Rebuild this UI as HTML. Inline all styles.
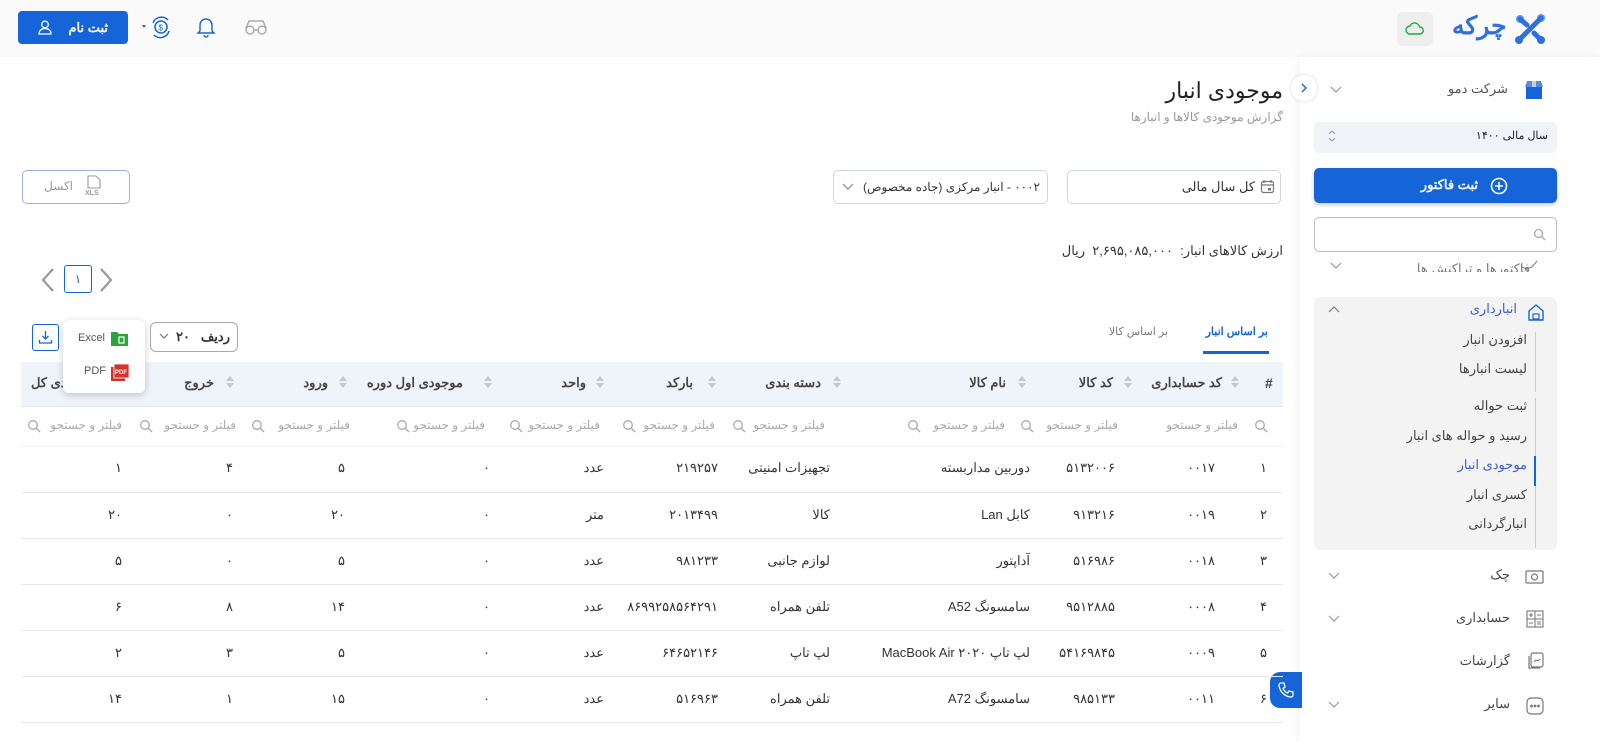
<!DOCTYPE html>
<html><head><meta charset="utf-8"><style>
*{box-sizing:border-box;margin:0;padding:0}
body{width:1600px;height:742px;overflow:hidden;background:#fff;font-family:"Liberation Sans","Noto Sans CJK SC",sans-serif;color:#333;position:relative;font-size:13px}
.a{position:absolute;white-space:nowrap}
.r{direction:rtl}
.g{color:#999}
.box{position:absolute;border:1px solid #cfd6e0;border-radius:5px;background:#fff}
.line{position:absolute;left:21px;width:1262px;height:1px;background:#e6e8ec}
svg{display:block}
</style></head><body>
<!-- header -->
<div class="a" style="left:0;top:0;width:1600px;height:57px;background:#fafafa"></div>
<div class="a" style="left:18px;top:11px;width:110px;height:33px;background:#1565d8;border-radius:4px;color:#fff;font-weight:bold;font-size:13px;line-height:33px;padding-left:20px">
<svg class="a" style="left:20px;top:9px" width="14" height="15" viewBox="0 0 14 15"><circle cx="7" cy="4.5" r="3.3" fill="none" stroke="#fff" stroke-width="1.3"/><path d="M1 14c0-3.5 2.7-5.5 6-5.5s6 2 6 5.5z" fill="none" stroke="#fff" stroke-width="1.3"/></svg>
<span class="a r" style="right:20px">ثبت نام</span></div>
<svg class="a" style="left:141px;top:15px" width="30" height="26" viewBox="0 0 30 26"><path d="M1 10l4 0-2 3z" fill="#1565d8"/><circle cx="20" cy="12" r="6" fill="none" stroke="#1565d8" stroke-width="1.5"/><path d="M12 8a9 9 0 0 1 15-3M28 16a9 9 0 0 1-15 4" fill="none" stroke="#1565d8" stroke-width="1.5"/><text x="17.5" y="15.5" font-size="8" fill="#1565d8">$</text></svg>
<svg class="a" style="left:196px;top:16px" width="20" height="22" viewBox="0 0 20 22"><path d="M4 15V9a6 6 0 0 1 12 0v6l2 2H2z M8 19a2 2 0 0 0 4 0" fill="none" stroke="#1565d8" stroke-width="1.4"/></svg>
<svg class="a" style="left:244px;top:18px" width="24" height="18" viewBox="0 0 24 18"><circle cx="6" cy="12" r="4" fill="none" stroke="#aaa" stroke-width="1.4"/><circle cx="18" cy="12" r="4" fill="none" stroke="#aaa" stroke-width="1.4"/><path d="M10 12h4M2 10L5 3h14l3 7" fill="none" stroke="#aaa" stroke-width="1.4"/></svg>
<div class="a" style="left:1397px;top:12px;width:36px;height:34px;background:#eee;border-radius:6px"></div>
<svg class="a" style="left:1405px;top:21px" width="20" height="14" viewBox="0 0 20 14"><path d="M5 13a4 4 0 0 1 0-8 5 5 0 0 1 9.5 1 3.5 3.5 0 0 1 .5 7z" fill="none" stroke="#22aa33" stroke-width="1.4"/></svg>
<div class="a r" style="left:1452px;top:11px;font-size:25px;font-weight:bold;color:#2f6fe0">چرکه</div>
<svg class="a" style="left:1514px;top:13px" width="32" height="32" viewBox="0 0 32 32"><circle cx="6" cy="6" r="4" fill="#5b9cf0"/><circle cx="27" cy="5" r="4" fill="#5b9cf0"/><circle cx="5" cy="27" r="4" fill="#2f6fe0"/><circle cx="27" cy="27" r="4" fill="#2f6fe0"/><path d="M6 6L13 12M27 5L5 27M20 20L27 27" stroke="#2f6fe0" stroke-width="5" stroke-linecap="round"/></svg>

<!-- sidebar -->
<div class="a" style="left:1300px;top:57px;width:300px;height:685px;background:#fff;box-shadow:-2px 0 8px rgba(0,0,0,.05)"></div>
<div class="a" style="left:1291px;top:75px;width:26px;height:26px;border-radius:50%;background:#fff;box-shadow:0 0 5px rgba(0,0,0,.15)"></div>
<svg class="a" style="left:1299px;top:82px" width="10" height="12"><path d="M3 2l4 4-4 4" fill="none" stroke="#1565d8" stroke-width="1.4"/></svg>
<svg class="a" style="left:1524px;top:80px" width="20" height="20" viewBox="0 0 20 20"><rect x="2" y="6" width="16" height="13" fill="#1565d8"/><path d="M1 7l2-6h14l2 6z" fill="#5b8bd8"/><rect x="8" y="1" width="4" height="6" fill="#fff" opacity=".6"/></svg>
<div class="a r" style="right:92px;top:81px;font-size:13px;color:#555">شرکت دمو</div>
<svg class="a" style="left:1330px;top:86px" width="12" height="8"><path d="M1 1l5 5 5-5" fill="none" stroke="#999" stroke-width="1.2"/></svg>
<div class="a" style="left:1314px;top:122px;width:243px;height:31px;background:#f0f3f8;border-radius:5px"></div>
<div class="a r" style="right:52px;top:129px;font-size:11px;color:#222">سال مالی ۱۴۰۰</div>
<svg class="a" style="left:1327px;top:128px" width="10" height="16"><path d="M2 6l3-3 3 3M2 10l3 3 3-3" fill="none" stroke="#999" stroke-width="1.1"/></svg>
<div class="a" style="left:1314px;top:168px;width:243px;height:35px;background:#1565d8;border-radius:5px;box-shadow:0 2px 4px rgba(0,0,0,.2)"></div>
<div class="a r" style="right:122px;top:177px;font-size:13px;color:#fff;font-weight:bold">ثبت فاکتور</div>
<svg class="a" style="left:1490px;top:177px" width="18" height="18"><circle cx="9" cy="9" r="7.5" fill="none" stroke="#fff" stroke-width="1.6"/><path d="M9 5v8M5 9h8" stroke="#fff" stroke-width="1.6"/></svg>
<div class="a" style="left:1314px;top:217px;width:243px;height:35px;border:1px solid #bbb;border-radius:5px"></div>
<svg class="a" style="left:1533px;top:228px" width="13" height="13"><circle cx="5.5" cy="5.5" r="4" fill="none" stroke="#aaa" stroke-width="1.3"/><path d="M8.5 8.5l3.5 3.5" stroke="#aaa" stroke-width="1.3"/></svg>
<div class="a r" style="right:70px;top:258px;font-size:13px;color:#777;height:14px;overflow:hidden;line-height:22px">فاکتورها و تراکنش ها</div>
<svg class="a" style="left:1330px;top:262px" width="12" height="8"><path d="M1 1l5 5 5-5" fill="none" stroke="#999" stroke-width="1.2"/></svg>
<svg class="a" style="left:1521px;top:259px" width="18" height="12"><path d="M1 8l4 2 6-2 5-6" fill="none" stroke="#888" stroke-width="1.2"/></svg>
<div class="a" style="left:1314px;top:297px;width:243px;height:253px;background:#f3f3f3;border-radius:7px"></div>
<svg class="a" style="left:1527px;top:303px" width="18" height="18" viewBox="0 0 18 18"><path d="M2 8L9 2l7 6v9H2z" fill="none" stroke="#1565d8" stroke-width="1.4"/><rect x="6" y="11" width="6" height="5" fill="none" stroke="#1565d8" stroke-width="1.2"/></svg>
<div class="a r" style="right:83px;top:301px;font-size:13px;color:#3b5bd6">انبارداری</div>
<svg class="a" style="left:1328px;top:306px" width="12" height="8"><path d="M1 6l5-5 5 5" fill="none" stroke="#777" stroke-width="1.2"/></svg>
<div class="a" style="left:1535px;top:332px;width:1px;height:60px;background:#ccc"></div>
<div class="a" style="left:1535px;top:398px;width:1px;height:150px;background:#ccc"></div>
<div class="a" style="left:1534px;top:456px;width:2px;height:30px;background:#1565d8"></div>
<div class="a r" style="right:73px;top:332px;font-size:13px;color:#444">افزودن انبار</div>
<div class="a r" style="right:73px;top:361px;font-size:13px;color:#444">لیست انبارها</div>
<div class="a r" style="right:73px;top:398px;font-size:13px;color:#444">ثبت حواله</div>
<div class="a r" style="right:73px;top:428px;font-size:13px;color:#444">رسید و حواله های انبار</div>
<div class="a r" style="right:73px;top:457px;font-size:13px;color:#3b5bd6">موجودی انبار</div>
<div class="a r" style="right:73px;top:487px;font-size:13px;color:#444">کسری انبار</div>
<div class="a r" style="right:73px;top:516px;font-size:13px;color:#444">انبارگردانی</div>
<div class="a r" style="right:90px;top:567px;font-size:13px;color:#444">چک</div>
<div class="a r" style="right:90px;top:610px;font-size:13px;color:#444">حسابداری</div>
<div class="a r" style="right:90px;top:653px;font-size:13px;color:#444">گزارشات</div>
<div class="a r" style="right:90px;top:696px;font-size:13px;color:#444">سایر</div>
<svg class="a" style="left:1328px;top:572px" width="12" height="8"><path d="M1 1l5 5 5-5" fill="none" stroke="#999" stroke-width="1.2"/></svg>
<svg class="a" style="left:1328px;top:615px" width="12" height="8"><path d="M1 1l5 5 5-5" fill="none" stroke="#999" stroke-width="1.2"/></svg>
<svg class="a" style="left:1328px;top:701px" width="12" height="8"><path d="M1 1l5 5 5-5" fill="none" stroke="#999" stroke-width="1.2"/></svg>
<svg class="a" style="left:1525px;top:569px" width="20" height="16"><rect x="1" y="2" width="17" height="12" rx="1" fill="none" stroke="#777" stroke-width="1.2"/><circle cx="9.5" cy="8" r="3" fill="none" stroke="#777" stroke-width="1.2"/></svg>
<svg class="a" style="left:1526px;top:610px" width="18" height="18"><rect x="1" y="1" width="16" height="16" fill="none" stroke="#777" stroke-width="1.1"/><path d="M9 1v16M1 9h16M3 5h4M5 3v4M11 5h4M3 13h4M11 12h4M11 14h4" stroke="#777" stroke-width="1"/></svg>
<svg class="a" style="left:1528px;top:652px" width="16" height="18"><rect x="3" y="1" width="12" height="14" rx="2" fill="none" stroke="#777" stroke-width="1.2"/><path d="M1 4v12h11" fill="none" stroke="#777" stroke-width="1.2"/><path d="M6 10l2-2 2 1 2-2" fill="none" stroke="#777"/></svg>
<svg class="a" style="left:1526px;top:697px" width="18" height="18"><rect x="1" y="1" width="16" height="16" rx="4" fill="none" stroke="#777" stroke-width="1.2"/><circle cx="5.5" cy="9" r="1.4" fill="#777"/><circle cx="9" cy="9" r="1.4" fill="#777"/><circle cx="12.5" cy="9" r="1.4" fill="#777"/></svg>
<div class="a" style="left:1270px;top:672px;width:32px;height:36px;background:#1565d8;border-radius:10px 0 0 10px"></div>
<svg class="a" style="left:1277px;top:681px" width="18" height="18"><path d="M4 2l3 0 1 4-2 1.5a10 10 0 0 0 4.5 4.5L12 10l4 1v3a2 2 0 0 1-2 2A13 13 0 0 1 2 4a2 2 0 0 1 2-2z" fill="none" stroke="#fff" stroke-width="1.3"/></svg>

<!-- main -->
<div class="a r" style="right:317px;top:78px;font-size:22px;color:#222">موجودی انبار</div>
<div class="a r g" style="right:317px;top:110px;font-size:12px">گزارش موجودی کالاها و انبارها</div>
<div class="box" style="left:1067px;top:170px;width:214px;height:34px"></div>
<svg class="a" style="left:1260px;top:179px" width="15" height="15"><rect x="1.5" y="2.5" width="12" height="11" rx="2" fill="none" stroke="#777" stroke-width="1.2"/><path d="M4 1v3M11 1v3M1.5 6h12" stroke="#777" stroke-width="1.2"/><rect x="8" y="9" width="3" height="2.5" fill="#777"/></svg>
<div class="a r" style="right:345px;top:179px;font-size:13px;color:#333">کل سال مالی</div>
<div class="box" style="left:833px;top:170px;width:215px;height:34px"></div>
<div class="a r" style="right:560px;top:180px;font-size:12px;color:#333">۰۰۰۲ - انبار مرکزی (جاده مخصوص)</div>
<svg class="a" style="left:842px;top:183px" width="12" height="8"><path d="M1 1l5 5 5-5" fill="none" stroke="#888" stroke-width="1.2"/></svg>
<div class="box" style="left:22px;top:170px;width:108px;height:34px;border-color:#9db4d8"></div>
<div class="a r g" style="right:1527px;top:179px;font-size:12px">اکسل</div>
<svg class="a" style="left:84px;top:175px" width="20" height="22"><path d="M4 1h8l4 4v8H4z" fill="none" stroke="#999" stroke-width="1.1"/><text x="1" y="20" font-size="7" fill="#999" font-family="Liberation Sans" font-weight="bold">XLS</text></svg>
<div class="a r" style="right:317px;top:243px;font-size:13px;color:#333">ارزش کالاهای انبار:&nbsp; ۲,۶۹۵,۰۸۵,۰۰۰&nbsp; ریال</div>
<svg class="a" style="left:40px;top:267px" width="16" height="26"><path d="M13 2L3 13l10 11" fill="none" stroke="#999" stroke-width="2.2"/></svg>
<div class="a" style="left:64px;top:265px;width:28px;height:28px;border:1px solid #1565d8;border-radius:3px;text-align:center;line-height:26px;color:#1565d8;font-size:12px">۱</div>
<svg class="a" style="left:98px;top:267px" width="16" height="26"><path d="M3 2l10 11L3 24" fill="none" stroke="#999" stroke-width="2.2"/></svg>
<!-- tabs -->
<div class="a r" style="right:332px;top:325px;font-size:11px;color:#1565d8;font-weight:bold">بر اساس انبار</div>
<div class="a" style="left:1203px;top:351px;width:66px;height:3px;background:#1565d8"></div>
<div class="a r g" style="right:432px;top:325px;font-size:11px;color:#777">بر اساس کالا</div>
<!-- controls -->
<div class="a" style="left:32px;top:324px;width:27px;height:27px;border:1px solid #1565d8;border-radius:3px"></div>
<svg class="a" style="left:38px;top:330px" width="15" height="15"><path d="M7.5 1v8M4.5 6l3 3 3-3M1.5 10v3h12v-3" fill="none" stroke="#1565d8" stroke-width="1.3"/></svg>
<div class="a" style="left:150px;top:322px;width:88px;height:30px;border:1px solid #aaa;border-radius:6px"></div>
<div class="a r" style="right:1370px;top:329px;font-size:13px;color:#333;font-weight:bold">ردیف&nbsp;&nbsp; ۲۰</div>
<svg class="a" style="left:159px;top:333px" width="10" height="7"><path d="M1 1l4 4 4-4" fill="none" stroke="#777" stroke-width="1.2"/></svg>
<!-- table header -->
<div class="a" style="left:21px;top:362px;width:1262px;height:45px;background:#eff3fa"></div>
<div class="line" style="top:406px"></div>
<span class="a" style="left:1265px;top:375px;font-size:14px;font-weight:bold;color:#444">#</span>
<div class="a r" style="right:378px;top:375px;font-weight:bold;color:#444">کد حسابداری</div>
<div class="a r" style="right:487px;top:375px;font-weight:bold;color:#444">کد کالا</div>
<div class="a r" style="right:594px;top:375px;font-weight:bold;color:#444">نام کالا</div>
<div class="a r" style="right:779px;top:375px;font-weight:bold;color:#444">دسته بندی</div>
<div class="a r" style="right:907px;top:375px;font-weight:bold;color:#444">بارکد</div>
<div class="a r" style="right:1014px;top:375px;font-weight:bold;color:#444">واحد</div>
<div class="a r" style="right:1137px;top:375px;font-weight:bold;color:#444">موجودی اول دوره</div>
<div class="a r" style="right:1272px;top:375px;font-weight:bold;color:#444">ورود</div>
<div class="a r" style="right:1386px;top:375px;font-weight:bold;color:#444">خروج</div>
<div class="a r" style="right:1505px;top:375px;font-weight:bold;color:#444">موجودی کل</div>
<svg class="a" style="left:0;top:374px" width="1300" height="16">
<g fill="#c4c8cf">
<path d="M1235 2l4 5h-8zM1235 14l4-5h-8z"/>
<path d="M1128 2l4 5h-8zM1128 14l4-5h-8z"/>
<path d="M1022 2l4 5h-8zM1022 14l4-5h-8z"/>
<path d="M837 2l4 5h-8zM837 14l4-5h-8z"/>
<path d="M712 2l4 5h-8zM712 14l4-5h-8z"/>
<path d="M600 2l4 5h-8zM600 14l4-5h-8z"/>
<path d="M488 2l4 5h-8zM488 14l4-5h-8z"/>
<path d="M343 2l4 5h-8zM343 14l4-5h-8z"/>
<path d="M230 2l4 5h-8zM230 14l4-5h-8z"/>
</g></svg>
<!-- filter row -->
<svg class="a" style="left:0;top:419px" width="1300" height="16"><g fill="none" stroke="#aaa" stroke-width="1.3">
<circle cx="1260" cy="6" r="4.3"/><path d="M1263 9l4 4"/>
<circle cx="1026" cy="6" r="4.3"/><path d="M1029 9l4 4"/>
<circle cx="913" cy="6" r="4.3"/><path d="M916 9l4 4"/>
<circle cx="738" cy="6" r="4.3"/><path d="M741 9l4 4"/>
<circle cx="628" cy="6" r="4.3"/><path d="M631 9l4 4"/>
<circle cx="515" cy="6" r="4.3"/><path d="M518 9l4 4"/>
<circle cx="402" cy="6" r="4.3"/><path d="M405 9l4 4"/>
<circle cx="257" cy="6" r="4.3"/><path d="M260 9l4 4"/>
<circle cx="145" cy="6" r="4.3"/><path d="M148 9l4 4"/>
<circle cx="33" cy="6" r="4.3"/><path d="M36 9l4 4"/>
</g></svg>
<div style="font-size:12px;color:#aaa">
<span class="a r" style="right:362px;top:418px">فیلتر و جستجو</span>
<span class="a r" style="right:482px;top:418px">فیلتر و جستجو</span>
<span class="a r" style="right:595px;top:418px">فیلتر و جستجو</span>
<span class="a r" style="right:775px;top:418px">فیلتر و جستجو</span>
<span class="a r" style="right:885px;top:418px">فیلتر و جستجو</span>
<span class="a r" style="right:1000px;top:418px">فیلتر و جستجو</span>
<span class="a r" style="right:1115px;top:418px">فیلتر و جستجو</span>
<span class="a r" style="right:1250px;top:418px">فیلتر و جستجو</span>
<span class="a r" style="right:1364px;top:418px">فیلتر و جستجو</span>
<span class="a r" style="right:1478px;top:418px">فیلتر و جستجو</span>
</div>
<div class="line" style="top:446px;background:#eef0f3"></div>
<div class="line" style="top:492px"></div>
<div class="line" style="top:538px"></div>
<div class="line" style="top:584px"></div>
<div class="line" style="top:630px"></div>
<div class="line" style="top:676px"></div>
<div class="line" style="top:722px"></div>
<div style="font-size:13px;color:#333">
<span class="a r" style="right:333px;top:460px">۱</span><span class="a r" style="right:385px;top:460px">۰۰۱۷</span><span class="a r" style="right:485px;top:460px">۵۱۳۲۰۰۶</span><span class="a r" style="right:570px;top:460px">دوربین مداربسته</span><span class="a r" style="right:770px;top:460px">تجهیزات امنیتی</span><span class="a r" style="right:882px;top:460px">۲۱۹۲۵۷</span><span class="a r" style="right:996px;top:460px">عدد</span><span class="a r" style="right:1110px;top:460px">۰</span><span class="a r" style="right:1255px;top:460px">۵</span><span class="a r" style="right:1367px;top:460px">۴</span><span class="a r" style="right:1478px;top:460px">۱</span>
<span class="a r" style="right:333px;top:507px">۲</span><span class="a r" style="right:385px;top:507px">۰۰۱۹</span><span class="a r" style="right:485px;top:507px">۹۱۳۲۱۶</span><span class="a r" style="right:570px;top:507px">کابل Lan</span><span class="a r" style="right:770px;top:507px">کالا</span><span class="a r" style="right:882px;top:507px">۲۰۱۳۴۹۹</span><span class="a r" style="right:996px;top:507px">متر</span><span class="a r" style="right:1110px;top:507px">۰</span><span class="a r" style="right:1255px;top:507px">۲۰</span><span class="a r" style="right:1367px;top:507px">۰</span><span class="a r" style="right:1478px;top:507px">۲۰</span>
<span class="a r" style="right:333px;top:553px">۳</span><span class="a r" style="right:385px;top:553px">۰۰۱۸</span><span class="a r" style="right:485px;top:553px">۵۱۶۹۸۶</span><span class="a r" style="right:570px;top:553px">آداپتور</span><span class="a r" style="right:770px;top:553px">لوازم جانبی</span><span class="a r" style="right:882px;top:553px">۹۸۱۲۳۳</span><span class="a r" style="right:996px;top:553px">عدد</span><span class="a r" style="right:1110px;top:553px">۰</span><span class="a r" style="right:1255px;top:553px">۵</span><span class="a r" style="right:1367px;top:553px">۰</span><span class="a r" style="right:1478px;top:553px">۵</span>
<span class="a r" style="right:333px;top:599px">۴</span><span class="a r" style="right:385px;top:599px">۰۰۰۸</span><span class="a r" style="right:485px;top:599px">۹۵۱۲۸۸۵</span><span class="a r" style="right:570px;top:599px">سامسونگ A52</span><span class="a r" style="right:770px;top:599px">تلفن همراه</span><span class="a r" style="right:882px;top:599px">۸۶۹۹۲۵۸۵۶۴۲۹۱</span><span class="a r" style="right:996px;top:599px">عدد</span><span class="a r" style="right:1110px;top:599px">۰</span><span class="a r" style="right:1255px;top:599px">۱۴</span><span class="a r" style="right:1367px;top:599px">۸</span><span class="a r" style="right:1478px;top:599px">۶</span>
<span class="a r" style="right:333px;top:645px">۵</span><span class="a r" style="right:385px;top:645px">۰۰۰۹</span><span class="a r" style="right:485px;top:645px">۵۴۱۶۹۸۴۵</span><span class="a r" style="right:570px;top:645px">لپ تاپ MacBook Air ۲۰۲۰</span><span class="a r" style="right:770px;top:645px">لپ تاپ</span><span class="a r" style="right:882px;top:645px">۶۴۶۵۲۱۴۶</span><span class="a r" style="right:996px;top:645px">عدد</span><span class="a r" style="right:1110px;top:645px">۰</span><span class="a r" style="right:1255px;top:645px">۵</span><span class="a r" style="right:1367px;top:645px">۳</span><span class="a r" style="right:1478px;top:645px">۲</span>
<span class="a r" style="right:333px;top:691px">۶</span><span class="a r" style="right:385px;top:691px">۰۰۱۱</span><span class="a r" style="right:485px;top:691px">۹۸۵۱۳۳</span><span class="a r" style="right:570px;top:691px">سامسونگ A72</span><span class="a r" style="right:770px;top:691px">تلفن همراه</span><span class="a r" style="right:882px;top:691px">۵۱۶۹۶۳</span><span class="a r" style="right:996px;top:691px">عدد</span><span class="a r" style="right:1110px;top:691px">۰</span><span class="a r" style="right:1255px;top:691px">۱۵</span><span class="a r" style="right:1367px;top:691px">۱</span><span class="a r" style="right:1478px;top:691px">۱۴</span>
</div>
<!-- popup -->
<div class="a" style="left:63px;top:320px;width:82px;height:73px;background:#fff;border-radius:6px;box-shadow:0 2px 8px rgba(0,0,0,.2)"></div>
<span class="a" style="left:78px;top:332px;font-size:11px;color:#555">Excel</span>
<span class="a" style="left:84px;top:365px;font-size:11px;color:#555">PDF</span>
<svg class="a" style="left:110px;top:331px" width="20" height="16"><path d="M1 1h6l2 2h9v12H1z" fill="#2aa53a"/><rect x="9" y="6" width="5" height="6" fill="none" stroke="#fff" stroke-width="1.2"/></svg>
<svg class="a" style="left:110px;top:363px" width="20" height="20"><rect x="1" y="4" width="14" height="14" fill="#c0392b"/><rect x="4" y="1" width="15" height="14" fill="#d9302a" stroke="#fff" stroke-width=".8"/><text x="5" y="11" font-size="6" fill="#fff" font-family="Liberation Sans" font-weight="bold">PDF</text></svg>
</body></html>
